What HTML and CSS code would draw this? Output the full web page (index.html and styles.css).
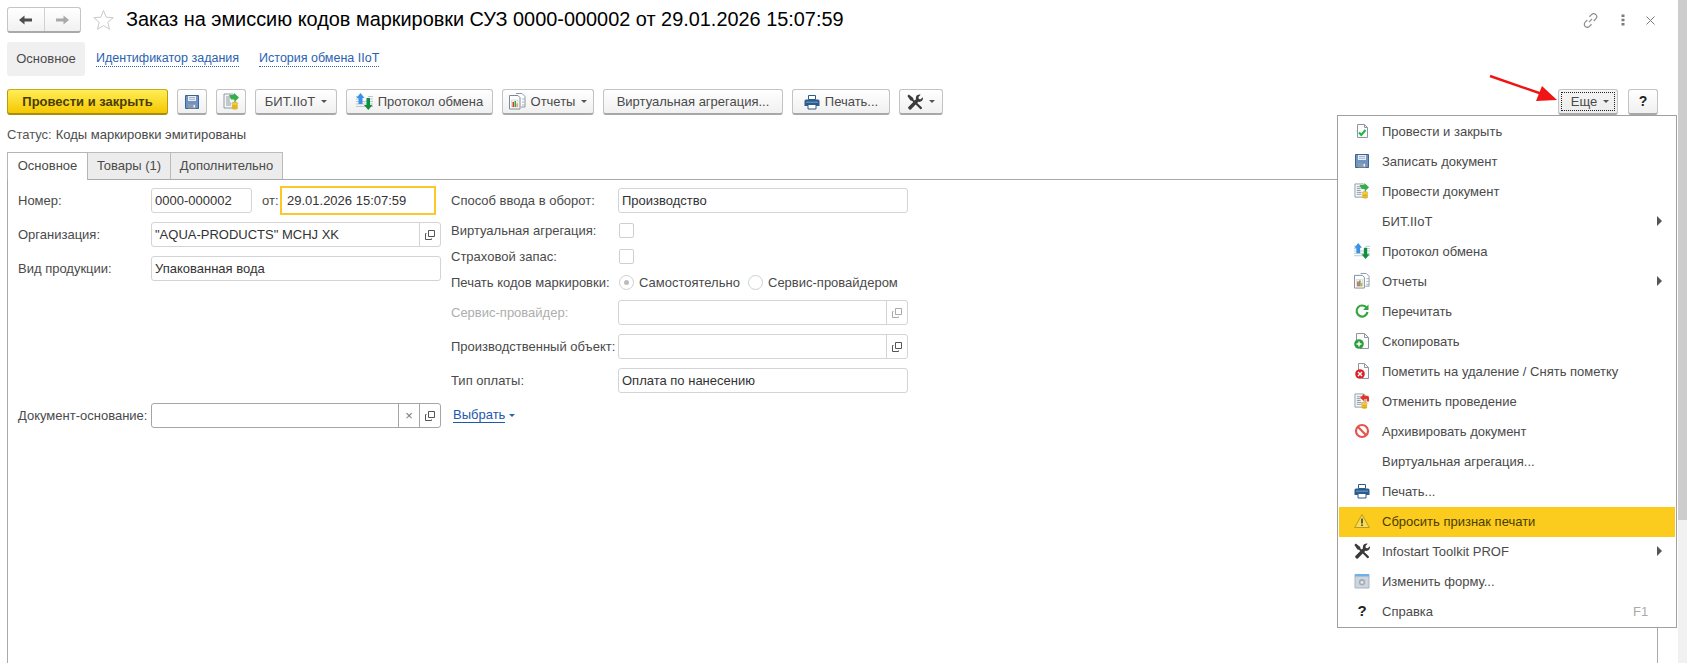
FILE: index.html
```html
<!DOCTYPE html>
<html lang="ru">
<head>
<meta charset="utf-8">
<title>Заказ на эмиссию кодов маркировки</title>
<link rel="stylesheet" href="styles.css">
</head>
<body>
<svg class="sprite" width="0" height="0">
  <defs>
    <symbol id="i-save" viewBox="0 0 16 16"><path d="M1.500 1.500h13v13h-13z" fill="#6f94c4" stroke="#3f6391"/><path d="M4 2h8v5H4z" fill="#e9eef5"/><path d="M5 3.500h6M5 5.300h6" stroke="#9fb4cf"/><path d="M4 10h8v4.500H4z" fill="#8a99ac"/><path d="M9.500 11h1.500v2.500H9.500z" fill="#eef1f5"/></symbol>
    <symbol id="i-post" viewBox="0 0 17 17"><path d="M1 1h9l2 2v12H1z" fill="#f6f6f6" stroke="#8d9aa8"/><path d="M3 4h5M3 6h4M3 8h4M3 10h5M3 12h5" stroke="#8d9aa8"/><path d="M6 2h5V0l5 4.500L11.500 9V6.500H8z" fill="#33b04a"/><ellipse cx="11.800" cy="10.500" rx="3" ry="1.400" fill="#f5cf45" stroke="#b8932a" stroke-width=".5"/><path d="M8.800 10.500v4.700c0 .8 1.400 1.500 3 1.500s3-.7 3-1.500v-4.700" fill="#f3c93c"/><path d="M9 13h5.500M9 15h5.500" stroke="#b8932a" stroke-width=".7"/></symbol>
    <symbol id="i-proto" viewBox="0 0 17 17"><path d="M0 3.500h5M0 6h5M0 8.500h17M0 11h17M0 13.500h17M12 3.500h5M12 6h5" stroke="#b9c6d6"/><path d="M4.500 0l4 5H6.500v6h-4V5H.500z" fill="#3b93e6"/><path d="M10.500 5h3.500v7h2.500l-4.200 5-4.300-5h2.500z" fill="#0f8f3c"/></symbol>
    <symbol id="i-rep" viewBox="0 0 17 17"><path d="M7 .5h6l3 3V14h-4" fill="#fff" stroke="#8a97a5"/><path d="M.5 2.500H9l2 2V16H.5z" fill="#fff" stroke="#7c8997"/><path d="M2.500 7h6.500v7H2.500z" fill="#f3f3f3" stroke="#b5bcc4" stroke-width=".5"/><path d="M3.500 9h1.500v5H3.500z" fill="#d93b30"/><path d="M5.500 8h1.500v6H5.500z" fill="#3aa64a"/><path d="M7.500 10.500h1.300V14H7.500z" fill="#e8a020"/><path d="M13 6h3M13 9h3M13 12h3" stroke="#aab3bd"/></symbol>
    <symbol id="i-print" viewBox="0 0 16 16"><path d="M4.500 1.500h7v4h-7z" fill="#fff" stroke="#2c5d8a"/><path d="M2 5.500h12a1.500 1.500 0 0 1 1.500 1.500v5H0.500V7A1.500 1.500 0 0 1 2 5.500z" fill="#2c5d8a"/><path d="M2 7.500h12v1.500H2z" fill="#5b8ab3"/><path d="M4 10.500h8v4.500H4z" fill="#fff" stroke="#2c5d8a"/></symbol>
    <symbol id="i-tools" viewBox="0 0 16 16"><path d="M1.800.6L6.200 4l.2 1.400 1.300 1.200 1.300-1.300c-.4-1.700.2-3.300 1.600-4.200 1-.6 2-.7 3-.4L11.500 3l.3 1.900 1.900.4 2.100-2.100c.4 1.300.1 2.600-.8 3.600-1 1-2.300 1.400-3.600 1l-1.200 1.200 4.500 4.300c.9.900-.6 2.500-1.500 1.600L8.700 10.600l-4.800 4.800c-.4.400-1 .4-1.500 0l-1-1c-.4-.4-.4-1 0-1.400l4.900-4.900-1.300-1.300-1.500-.2L.4 2z" fill="#3a3a3a"/></symbol>
    <symbol id="i-check" viewBox="0 0 16 16"><path d="M3.500 1.500h7l3 3v10h-10z" fill="#fbfbfb" stroke="#8c97a3"/><path d="M10.500 1.500v3h3" fill="none" stroke="#8c97a3"/><path d="M1.500 8h1" stroke="#c5ccd3"/><path d="M5 9.500l2.300 2.500L11.500 7" fill="none" stroke="#21b53d" stroke-width="2"/></symbol>
    <symbol id="i-refresh" viewBox="0 0 16 16"><path d="M12.700 5A5.500 5.500 0 1 0 13.500 9" fill="none" stroke="#2ea83c" stroke-width="2.200"/><path d="M14.500 1.500v5.500H9z" fill="#2ea83c"/></symbol>
    <symbol id="i-copy" viewBox="0 0 16 16"><path d="M2.500.5h8l4 4v11H6" fill="#fbfbfb" stroke="#8c97a3"/><path d="M2.500.5V8" stroke="#8c97a3"/><path d="M10.500.5v4h4" fill="none" stroke="#8c97a3"/><circle cx="5" cy="11" r="4.800" fill="#2e9d3e"/><path d="M2.500 11h5M5 8.500v5" stroke="#fff" stroke-width="1.400"/></symbol>
    <symbol id="i-del" viewBox="0 0 16 16"><path d="M4.500.5h6l4 4v11H8" fill="#fbfbfb" stroke="#8c97a3"/><path d="M4.500.5V7" stroke="#8c97a3"/><path d="M10.500.5v4h4" fill="none" stroke="#8c97a3"/><circle cx="6" cy="11" r="4.800" fill="#d8232a"/><path d="M4 9l4 4M8 9l-4 4" stroke="#fff" stroke-width="1.300"/></symbol>
    <symbol id="i-cancel" viewBox="0 0 17 17"><path d="M1 1h9l2 2v12H1z" fill="#f6f6f6" stroke="#8d9aa8"/><path d="M3 4h5M3 6h4M3 8h4M3 10h5M3 12h5" stroke="#8d9aa8"/><path d="M16 5v4h-2.500V6.500H11V9L6.500 5 11 .5V3h3a2 2 0 0 1 2 2z" fill="#e2352c"/><ellipse cx="11" cy="11" rx="3" ry="1.400" fill="#f5cf45" stroke="#b8932a" stroke-width=".5"/><path d="M8 11v4.500c0 .8 1.400 1.500 3 1.500s3-.7 3-1.500V11" fill="#f3c93c"/><path d="M8.200 13.500h5.500M8.200 15.500h5.500" stroke="#b8932a" stroke-width=".7"/></symbol>
    <symbol id="i-ban" viewBox="0 0 16 16"><circle cx="8" cy="8" r="6" fill="#fff" stroke="#e2574c" stroke-width="2.200"/><path d="M3.800 3.800l8.400 8.400" stroke="#e2574c" stroke-width="2.200"/></symbol>
    <symbol id="i-warn" viewBox="0 0 16 16"><path d="M8 1.500L15.300 14.500H.7z" fill="#f7dd55" stroke="#b99a1e" stroke-linejoin="round"/><path d="M7.200 5.500h1.600v5H7.200zM7.200 11.500h1.600v1.600H7.200z" fill="#3b3b3b"/></symbol>
    <symbol id="i-form" viewBox="0 0 16 16"><path d="M1 1.500h14v13.500H1z" fill="#cfd5dc" stroke="#a4b5c8"/><path d="M1 1h14v2.500H1z" fill="#6fb0e8"/><circle cx="8" cy="9.200" r="3.800" fill="#a5abb3" stroke="#e6e8eb" stroke-width=".6"/><circle cx="8" cy="9.200" r="1.500" fill="#e5e7ea"/></symbol>
    <symbol id="i-open" viewBox="0 0 11 11"><path d="M3.500 1.500h6v6h-6z" fill="none" stroke="currentColor"/><path d="M1.500 4.500h-1v6h6v-1" fill="none" stroke="currentColor"/></symbol>
  </defs>
</svg>

<div class="app">
  <main class="main">
    <header class="titlebar">
      <div class="nav">
        <button class="nav-btn"><svg width="14" height="10" viewBox="0 0 14 10"><path d="M0 5l5.500-4.500V3.500H13v3H5.500v3z" fill="#4d4d4d"/></svg></button>
        <button class="nav-btn"><svg width="14" height="10" viewBox="0 0 14 10"><path d="M14 5L8.500.5V3.500H1v3h7.500v3z" fill="#a9a9a9"/></svg></button>
      </div>
      <svg class="star" width="23" height="22" viewBox="0 0 22 22"><path d="M11 1.500l2.700 6.700 7 .5-5.400 4.600 1.700 7-6-3.800-6 3.800 1.700-7L1.300 8.700l7-.5z" fill="#fff" stroke="#c9c9c9"/></svg>
      <h1 class="title">Заказ на эмиссию кодов маркировки СУЗ 0000-000002 от 29.01.2026 15:07:59</h1>
      <div class="win-tools">
        <svg width="17" height="17" viewBox="0 0 16 16"><path d="M6.500 9.500l3-3M7 4.500l2-2a2.800 2.800 0 0 1 4 4l-2 2M9 11.500l-2 2a2.800 2.800 0 0 1-4-4l2-2" fill="none" stroke="#8c8c8c" stroke-width="1.100"/></svg>
        <svg width="4" height="12" viewBox="0 0 4 12"><path d="M.5.500h3v2.500h-3zM.5 4.700h3v2.500h-3zM.5 9h3v2.500h-3z" fill="#7b7b7b"/></svg>
        <svg width="9" height="9" viewBox="0 0 9 9"><path d="M.5.500l8 8M8.500.500l-8 8" stroke="#7b7b7b"/></svg>
      </div>
    </header>

    <nav class="sections">
      <span class="section active">Основное</span>
      <a class="section link l-first">Идентификатор задания</a>
      <a class="section link">История обмена IIoT</a>
    </nav>

    <div class="toolbar">
      <button class="btn primary">Провести и закрыть</button>
      <button class="btn icon-btn"><svg class="ic" width="16" height="16"><use href="#i-save"/></svg></button>
      <button class="btn icon-btn"><svg class="ic" width="17" height="17"><use href="#i-post"/></svg></button>
      <button class="btn w-bit">БИТ.IIoT<i class="caret"></i></button>
      <button class="btn w-proto"><svg class="ic" width="17" height="17"><use href="#i-proto"/></svg>Протокол обмена</button>
      <button class="btn w-rep"><svg class="ic" width="17" height="17"><use href="#i-rep"/></svg>Отчеты<i class="caret"></i></button>
      <button class="btn w-virt">Виртуальная агрегация...</button>
      <button class="btn w-print"><svg class="ic" width="16" height="16"><use href="#i-print"/></svg>Печать...</button>
      <button class="btn w-tools"><svg class="ic" width="16" height="16"><use href="#i-tools"/></svg><i class="caret"></i></button>
      <span class="spacer"></span>
      <button class="btn w-more"><span class="more-in">Еще<i class="caret"></i></span></button>
      <button class="btn w-help">?</button>
    </div>

    <div class="status"><span>Статус:</span><span>Коды маркировки эмитированы</span></div>

    <div class="tabs">
      <span class="tab active">Основное</span>
      <span class="tab t2">Товары (1)</span>
      <span class="tab t3">Дополнительно</span>
    </div>

    <section class="panel">
      <div class="col-left">
        <div class="row">
          <label class="lbl l1">Номер:</label>
          <div class="input w-num">0000-000002</div>
          <span class="ot">от:</span>
          <div class="input date">29.01.2026 15:07:59</div>
        </div>
        <div class="row">
          <label class="lbl l1">Организация:</label>
          <div class="input w-long"><span class="val">"AQUA-PRODUCTS" MCHJ XK</span><span class="cell"><svg width="11" height="11"><use href="#i-open"/></svg></span></div>
        </div>
        <div class="row">
          <label class="lbl l1">Вид продукции:</label>
          <div class="input w-long"><span class="val">Упакованная вода</span></div>
        </div>
        <div class="row">
          <label class="lbl l1">Документ-основание:</label>
          <div class="input w-long dark"><span class="val"></span><span class="cell x">×</span><span class="cell"><svg width="11" height="11"><use href="#i-open"/></svg></span></div>
          <a class="choose">Выбрать</a><i class="caret blue"></i>
        </div>
      </div>
      <div class="col-right">
        <div class="row"><label class="lbl l2">Способ ввода в оборот:</label><div class="input w-r"><span class="val">Производство</span></div></div>
        <div class="row"><label class="lbl l2">Виртуальная агрегация:</label><span class="chk"></span></div>
        <div class="row"><label class="lbl l2">Страховой запас:</label><span class="chk"></span></div>
        <div class="row"><label class="lbl l2">Печать кодов маркировки:</label><span class="radio on"></span><span class="r-text r-a">Самостоятельно</span><span class="radio"></span><span class="r-text">Сервис-провайдером</span></div>
        <div class="row"><label class="lbl l2 muted">Сервис-провайдер:</label><div class="input w-r"><span class="val"></span><span class="cell muted-ic"><svg width="11" height="11"><use href="#i-open"/></svg></span></div></div>
        <div class="row"><label class="lbl l2">Производственный объект:</label><div class="input w-r"><span class="val"></span><span class="cell"><svg width="11" height="11"><use href="#i-open"/></svg></span></div></div>
        <div class="row"><label class="lbl l2">Тип оплаты:</label><div class="input w-r"><span class="val">Оплата по нанесению</span></div></div>
      </div>
    </section>
  </main>
  <aside class="scrollbar"><div class="thumb"></div></aside>
</div>

<svg class="arrow" width="76" height="30" viewBox="0 0 76 30"><path d="M1 2l55 19" stroke="#f01414" stroke-width="2.400"/><path d="M68 26L47 27l6-15z" fill="#f01414"/></svg>

<ul class="menu">
  <li class="mi"><svg class="mic" width="16" height="16"><use href="#i-check"/></svg><span>Провести и закрыть</span></li>
  <li class="mi"><svg class="mic" width="16" height="16"><use href="#i-save"/></svg><span>Записать документ</span></li>
  <li class="mi"><svg class="mic" width="16" height="16"><use href="#i-post"/></svg><span>Провести документ</span></li>
  <li class="mi"><span class="mic"></span><span>БИТ.IIoT</span><i class="sub"></i></li>
  <li class="mi"><svg class="mic" width="16" height="16"><use href="#i-proto"/></svg><span>Протокол обмена</span></li>
  <li class="mi"><svg class="mic" width="16" height="16"><use href="#i-rep"/></svg><span>Отчеты</span><i class="sub"></i></li>
  <li class="mi"><svg class="mic" width="16" height="16"><use href="#i-refresh"/></svg><span>Перечитать</span></li>
  <li class="mi"><svg class="mic" width="16" height="16"><use href="#i-copy"/></svg><span>Скопировать</span></li>
  <li class="mi"><svg class="mic" width="16" height="16"><use href="#i-del"/></svg><span>Пометить на удаление / Снять пометку</span></li>
  <li class="mi"><svg class="mic" width="16" height="16"><use href="#i-cancel"/></svg><span>Отменить проведение</span></li>
  <li class="mi"><svg class="mic" width="16" height="16"><use href="#i-ban"/></svg><span>Архивировать документ</span></li>
  <li class="mi"><span class="mic"></span><span>Виртуальная агрегация...</span></li>
  <li class="mi"><svg class="mic" width="16" height="16"><use href="#i-print"/></svg><span>Печать...</span></li>
  <li class="mi hl"><svg class="mic" width="16" height="16"><use href="#i-warn"/></svg><span>Сбросить признак печати</span></li>
  <li class="mi"><svg class="mic" width="16" height="16"><use href="#i-tools"/></svg><span>Infostart Toolkit PROF</span><i class="sub"></i></li>
  <li class="mi"><svg class="mic" width="16" height="16"><use href="#i-form"/></svg><span>Изменить форму...</span></li>
  <li class="mi"><span class="mic qm">?</span><span>Справка</span><span class="key">F1</span></li>
</ul>
</body>
</html>
```
FILE: styles.css
```css
* { box-sizing: border-box; }
html, body { margin: 0; height: 100%; overflow: hidden; background: #fff; }
body { font: 13px/15px "Liberation Sans", Arial, sans-serif; color: #4a4a4a; position: relative; }
.sprite { position: absolute; }
button { font: inherit; color: inherit; margin: 0; padding: 0; }

.app { display: flex; height: 663px; }
.main { width: 1678px; display: flex; flex-direction: column; padding-left: 7px; }
.scrollbar { width: 9px; background: #f1f1f1; }
.thumb { height: 520px; background: #cdcdcd; }

.titlebar { display: flex; align-items: center; height: 26px; margin-top: 7px; }
.nav { display: flex; width: 74px; height: 26px; border: 1px solid #c4c4c4; border-bottom: 2px solid #a9a9a9; border-radius: 3px; background: linear-gradient(#fff, #f1f1f1); }
.nav-btn { flex: 1; border: 0; background: none; display: flex; align-items: center; justify-content: center; }
.nav-btn + .nav-btn { border-left: 1px solid #d0d0d0; }
.star { margin-left: 11px; }
.title { margin: 0 0 2px 11px; font-size: 19.900px; font-weight: 400; line-height: 24px; color: #000; white-space: nowrap; }
.win-tools { margin-left: auto; width: 73px; margin-right: 23px; display: flex; align-items: center; justify-content: space-between; }

.sections { display: flex; align-items: center; height: 34px; margin-top: 9px; }
.section { height: 34px; line-height: 34px; }
.section.active { width: 78px; background: #f0f0f0; border-radius: 3px; text-align: center; }
.section.link { color: #2a62b0; font-size: 12.500px; margin-left: 20px; height: auto; line-height: 15px; border-bottom: 1px dotted #2a62b0; }
.section.l-first { margin-left: 11px; }

.toolbar { display: flex; height: 26px; margin-top: 13px; padding-right: 20px; gap: 9px; }
.btn { height: 26px; border: 1px solid #c3c3c3; border-bottom: 2px solid #a8a8a8; border-radius: 3px; background: linear-gradient(#fff, #f0f0f0); display: flex; align-items: center; justify-content: center; white-space: nowrap; }
.btn .ic { margin-right: 5px; flex: none; }
.primary { width: 161px; font-weight: 700; color: #4a3d00; background: linear-gradient(#ffee58, #f5c800); border-color: #c9ab1a #b79c12 #a88e10; }
.icon-btn { width: 30px; }
.icon-btn .ic { margin: 0; }
.w-bit { width: 82px; }
.w-proto { width: 147px; }
.w-rep { width: 92px; }
.w-virt { width: 180px; }
.w-print { width: 98px; }
.w-tools { width: 44px; }
.w-tools .ic { margin-right: 0; }
.spacer { flex: 1; }
.w-more { width: 60px; padding: 2px; margin-right: 1px; background: linear-gradient(#f4f4f4, #ededed); }
.more-in { display: flex; align-items: center; justify-content: center; width: 100%; height: 100%; border: 1px dotted #222; padding-left: 4px; }
.w-help { width: 30px; font-size: 14px; font-weight: 700; color: #222; }
.caret { display: inline-block; margin-left: 6px; border: 3px solid transparent; border-top: 3px solid #555; border-bottom: 0; }
.caret.blue { border-top-color: #2a62b0; margin-left: 4px; align-self: center; }

.status { display: flex; gap: 4px; height: 15px; margin-top: 12px; }
.status span:first-child { color: #555; }

.tabs { display: flex; height: 27px; margin-top: 10px; }
.tab { height: 27px; line-height: 24px; padding: 1px 0 0; text-align: center; border: 1px solid #bbb; border-bottom: 0; background: #ececec; margin-left: -1px; }
.tab.active { width: 81px; margin-left: 0; background: #fff; position: relative; height: 28px; z-index: 1; border-color: #b5b5b5; }
.t2 { width: 84px; }
.t3 { width: 113px; }

.panel { flex: 1; width: 1651px; border: 1px solid #aaa; border-bottom: 0; display: flex; padding-left: 10px; }
.col-left { width: 433px; padding-top: 6px; display: grid; grid-template-rows: 36px 34px 147px 25px; align-content: start; }
.col-right { padding-top: 8px; display: grid; grid-template-rows: 35px 26px 26px 25px 34px 34px 25px; align-content: start; }
.row { display: flex; align-items: center; align-self: start; min-height: 15px; }
.lbl { flex: none; white-space: nowrap; }
.l1 { width: 133px; }
.l2 { width: 167px; }
.muted { color: #aeaeae; }

.input { display: flex; align-items: center; height: 25px; border: 1px solid #d4d4d4; border-radius: 3px; color: #333; white-space: nowrap; }
.val { flex: 1; padding-left: 3px; }
.w-num { width: 101px; padding-left: 3px; }
.ot { margin: 0 3px 0 10px; width: 15px; }
.date { width: 156px; height: 29px; border: 2px solid #fbc927; border-radius: 0; padding-left: 5px; }
.w-long { width: 290px; }
.w-r { width: 290px; }
.cell { width: 21px; height: 100%; border-left: 1px solid #d4d4d4; display: flex; align-items: center; justify-content: center; color: #555; }
.cell.x { font-size: 13px; color: #777; }
.muted-ic { color: #a9a9a9; }
.dark { border-color: #a6a6a6; }
.dark .cell { border-left-color: #a6a6a6; }
.choose { color: #1d58ad; border-bottom: 1px solid #1d58ad; margin-left: 12px; line-height: 14px; }

.chk { width: 15px; height: 15px; margin-left: 1px; border: 1px solid #cfcfcf; border-radius: 2px; }
.radio { width: 15px; height: 15px; margin-left: 1px; border: 1px solid #cfcfcf; border-radius: 50%; display: flex; align-items: center; justify-content: center; flex: none; }
.radio.on::after { content: ""; width: 5px; height: 5px; border-radius: 50%; background: #bdbdbd; }
.r-text { margin-left: 5px; white-space: nowrap; }
.r-a { width: 108px; }

.arrow { position: absolute; left: 1489px; top: 74px; }

.menu { position: absolute; left: 1337px; top: 115px; width: 340px; height: 513px; margin: 0; padding: 1px; list-style: none; background: #fff; border: 1px solid #a0a0a0; }
.mi { position: relative; display: flex; align-items: center; height: 30px; padding: 0 0 2px 15px; }
.mi.hl { background: #fbcb1d; color: #4a3d00; }
.mic { width: 16px; height: 16px; margin-right: 12px; flex: none; }
.qm { font-size: 15px; font-weight: 700; color: #222; text-align: center; }
.sub { position: absolute; right: 13px; top: 9px; border: 5px solid transparent; border-left: 5px solid #555; border-right: 0; }
.key { position: absolute; left: 294px; color: #aaa; }
```
